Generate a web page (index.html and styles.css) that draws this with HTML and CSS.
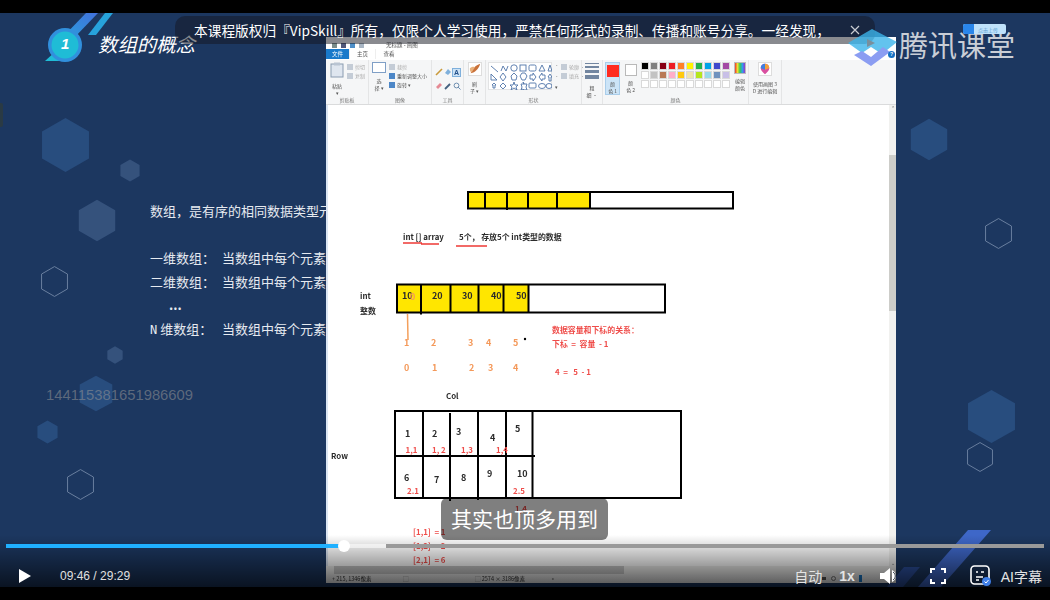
FILE: index.html
```html
<!DOCTYPE html>
<html lang="zh-CN">
<head>
  <meta charset="UTF-8">
  <meta name="viewport" content="width=device-width, initial-scale=1.0">
  <title>数组的概念</title>
  <link rel="stylesheet" href="styles.css">
</head>
<body>

  <div class="player">

    <!-- slide background -->
    <div class="slide">
      <svg class="decor" viewBox="0 13 1050 574" width="1050" height="574">
        <defs>
          <symbol id="hex" viewBox="0 0 48 54" preserveAspectRatio="none">
            <polygon points="24,1 47,14 47,40 24,53 1,40 1,14"/>
          </symbol>
          <linearGradient id="stripe" x1="0" y1="1" x2="1" y2="0">
            <stop offset="0" stop-color="#27a3dc"/>
            <stop offset="1" stop-color="#4270dc"/>
          </linearGradient>
        </defs>

        <g class="hex-a">
          <use href="#hex" x="41" y="117" width="49" height="56"/>
          <use href="#hex" x="79" y="375" width="34" height="37"/>
          <use href="#hex" x="37" y="420" width="21" height="24"/>
          <use href="#hex" x="910" y="118" width="38" height="43"/>
          <use href="#hex" x="967" y="389" width="49" height="55"/>
        </g>
        <g class="hex-b">
          <use href="#hex" x="120" y="159" width="20" height="23"/>
          <use href="#hex" x="78" y="199" width="38" height="43"/>
          <use href="#hex" x="107" y="346" width="16" height="18"/>
        </g>
        <g class="hex-line">
          <use href="#hex" x="41" y="266" width="27" height="31"/>
          <use href="#hex" x="67" y="469" width="27" height="31"/>
          <use href="#hex" x="985" y="218" width="27" height="31"/>
          <use href="#hex" x="967" y="442" width="26" height="30"/>
        </g>

        <!-- title badge -->
        <polygon points="86,13 98,13 72,40 60,40" fill="url(#stripe)"/>
        <polygon points="105,13 113,13 96,35 88,35" fill="#27a3dc"/>
        <polygon points="45,61 56,51 70,61" fill="#1fbcd6"/>
        <circle cx="65" cy="45" r="17" fill="#3190dd"/>
        <circle cx="65" cy="45" r="13.5" fill="#1fbcd6"/>

        <!-- lower right stripes -->
        <polygon points="968,530 991,530 941,587 918,587" fill="#3e67c8"/>
        <polygon points="904,567 920,567 903,587 887,587" fill="#2c4f9c"/>
      </svg>

      <span class="badge-num">1</span>
      <h1 class="slide-title">数组的概念</h1>

      <div class="slide-text">
        <p class="intro">数组，是有序的相同数据类型元</p>
        <p class="row"><span class="row-label">一维数组：</span>当数组中每个元素</p>
        <p class="row"><span class="row-label">二维数组：</span>当数组中每个元素</p>
        <p class="row dots">...</p>
        <p class="row"><span class="row-label"><span class="latin">N</span> 维数组：</span>当数组中每个元素</p>
      </div>

      <span class="watermark">144115381651986609</span>
      <span class="edge-tab"></span>
    </div>

    <!-- screen recording of the paint program -->
    <div class="paint">
      <div class="paint-title">
        <span class="qa-icon"></span>
        <span class="qa-icon qa-save"></span>
        <span class="qa-icon qa-undo"></span>
        <span class="qa-icon qa-redo"></span>
        <span class="window-name">无标题 - 画图</span>
      </div>

      <div class="paint-tabs">
        <span class="tab tab-file">文件</span>
        <span class="tab tab-on">主页</span>
        <span class="tab">查看</span>
      </div>

      <div class="ribbon">
        <section class="group g-clip">
          <div class="group-body">
            <div class="big-tool">
              <svg width="14" height="16" viewBox="0 0 14 16"><rect x="1" y="2" width="12" height="13" fill="#dfe6ef" stroke="#8a9bb0"/><rect x="4" y="0.5" width="6" height="3" fill="#b9c4d2"/></svg>
              <span>粘贴</span>
              <span>▾</span>
            </div>
            <div class="small-tools">
              <span class="off"><i class="mini"></i>剪切</span>
              <span class="off"><i class="mini"></i>复制</span>
            </div>
          </div>
          <span class="group-name">剪贴板</span>
        </section>

        <section class="group g-image">
          <div class="group-body">
            <div class="big-tool">
              <svg width="14" height="11" viewBox="0 0 14 11"><rect x="0.5" y="0.5" width="13" height="10" fill="#fff" stroke="#7f9fc6"/></svg>
              <span>选</span>
              <span>择 ▾</span>
            </div>
            <div class="small-tools">
              <span class="off"><i class="mini"></i>裁剪</span>
              <span><i class="mini mini-blue"></i>重新调整大小</span>
              <span><i class="mini mini-blue"></i>旋转 ▾</span>
            </div>
          </div>
          <span class="group-name">图像</span>
        </section>

        <section class="group g-tools">
          <div class="tool-grid">
            <svg width="8" height="8" viewBox="0 0 8 8"><path d="M1 7 7 1" stroke="#c99a3c" stroke-width="1.6"/></svg>
            <svg width="8" height="8" viewBox="0 0 8 8"><path d="M1 5 4 1l3 3-3 3z" fill="#7fb0dc"/></svg>
            <span class="tool-a">A</span>
            <svg width="8" height="8" viewBox="0 0 8 8"><path d="M1 5 5 1l2 2-4 4z" fill="#e58a94"/></svg>
            <svg width="8" height="8" viewBox="0 0 8 8"><path d="M1 7 6 2" stroke="#44617f" stroke-width="1.8"/></svg>
            <svg width="8" height="8" viewBox="0 0 8 8"><circle cx="3.5" cy="3.5" r="2.4" fill="none" stroke="#6f8fb0"/><path d="M5 5 7.5 7.5" stroke="#6f8fb0"/></svg>
          </div>
          <span class="group-name">工具</span>
        </section>

        <section class="group g-brush">
          <div class="big-tool">
            <svg class="boxed" width="14" height="14" viewBox="0 0 14 14"><path d="M2 12C3 7 8 3 13 1c-1 5-5 9-8 10z" fill="#c9713a"/><path d="M1 6c3-2 5-2 6-1L3 11C1 10 1 8 1 6z" fill="#e8b17c"/></svg>
            <span>刷</span>
            <span>子 ▾</span>
          </div>
        </section>

        <section class="group g-shapes">
          <div class="group-body">
            <div class="shape-box">
              <svg width="63" height="27" viewBox="0 0 63 27" fill="none" stroke="#4f74a8" stroke-width="0.9">
                <path d="M2 3l7 6M12 8l2-5 3 5 2-5"/><circle cx="25" cy="5" r="3.2"/><rect x="31" y="2" width="6" height="6"/><rect x="40" y="2" width="7" height="6" rx="1.5"/><path d="M50 8l3-6 3 6z"/><path d="M59 8l2-6 2 6z"/>
                <path d="M2 17V11l6 6z"/><path d="M14 10l3 4-3 4-3-4z"/><path d="M25 10l3 3-1 4h-4l-1-4z"/><path d="M33 10h3l2 3-2 4h-3l-2-4z"/><path d="M41 12h3v-2l3 4-3 4v-2h-3z"/><path d="M56 12h-3v-2l-3 4 3 4v-2h3z"/><path d="M61 11l2 3h-1v4h-2v-4h-1z"/>
                <path d="M5 20l2 2h-1v3H4v-3H3z"/><path d="M14 20l3 3-3 3-3-3z"/><path d="M25 19l1 3h3l-2 2 1 3-3-2-3 2 1-3-2-2h3z"/><path d="M34 19l1 2h3l-1 3 1 3h-3l-1-1-2 1 1-3-1-3h3z"/><rect x="40" y="20" width="7" height="5" rx="1"/><ellipse cx="53" cy="23" rx="3.5" ry="2.5"/><ellipse cx="60" cy="23" rx="3" ry="2.5"/>
              </svg>
            </div>
            <div class="shape-scroll"><span>-</span><span>-</span><span>▾</span></div>
            <div class="small-tools">
              <span class="off"><i class="mini"></i>轮廓 ·</span>
              <span class="off"><i class="mini"></i>填充 ·</span>
            </div>
          </div>
          <span class="group-name">形状</span>
        </section>

        <section class="group g-size">
          <div class="big-tool">
            <div class="weights"><i></i><i></i><i></i><i></i></div>
            <span>粗</span>
            <span>细 ·</span>
          </div>
        </section>

        <section class="group g-colors">
          <div class="group-body">
            <div class="color-slot slot-on">
              <span class="color-box box-red"></span>
              <span>颜</span>
              <span>色 1</span>
            </div>
            <div class="color-slot">
              <span class="color-box"></span>
              <span>颜</span>
              <span>色 2</span>
            </div>
            <div class="palette">
              <i class="sw-black"></i><i class="sw-gray"></i><i class="sw-maroon"></i><i class="sw-red"></i><i class="sw-orange"></i><i class="sw-yellow"></i><i class="sw-green"></i><i class="sw-sky"></i><i class="sw-indigo"></i><i class="sw-purple"></i>
              <i></i><i class="sw-silver"></i><i class="sw-brown"></i><i class="sw-pink"></i><i class="sw-gold"></i><i class="sw-cream"></i><i class="sw-lime"></i><i class="sw-ice"></i><i class="sw-steel"></i><i class="sw-lilac"></i>
              <i></i><i></i><i></i><i></i><i></i><i></i><i></i><i></i><i></i><i></i>
            </div>
            <div class="color-edit">
              <span class="rainbow"></span>
              <span>编辑</span>
              <span>颜色</span>
            </div>
          </div>
          <span class="group-name">颜色</span>
        </section>

        <section class="group g-3d">
          <div class="big-tool">
            <svg class="boxed" width="14" height="14" viewBox="0 0 14 14"><path d="M7 1c3 0 5 2 5 5 0 3-3 5-5 7-2-2-5-4-5-7 0-3 2-5 5-5z" fill="#d94fa0"/><path d="M7 1c3 0 5 2 5 5L7 8z" fill="#f2a03c"/><path d="M2 6c0-3 2-5 5-5v7z" fill="#3f7fe0"/></svg>
            <span>使用画图 3</span>
            <span>D 进行编辑</span>
          </div>
        </section>
      </div>

      <div class="paint-work">
        <svg class="sheet" viewBox="326 105 563 461" width="563" height="461">
          <!-- top array -->
          <rect class="fill-y" x="468" y="192" width="122" height="16.5"/>
          <rect class="box" x="468" y="192" width="265" height="16.5"/>
          <path class="box" d="M485 192v16.5M507 192v18M528 192v16.5M557 192v16.5M590 192v16.5"/>

          <text class="t" x="403" y="240">int [] array</text>
          <text class="t" x="459" y="240">5个， 存放5个 int类型的数据</text>
          <path class="ink" d="M403 243h19M421 244h18M456 246h31"/>

          <!-- int array -->
          <text class="t" x="360" y="299">int</text>
          <text class="t" x="360" y="314">整数</text>
          <rect class="fill-y" x="397" y="284.5" width="132" height="28"/>
          <rect class="box" x="397" y="284.5" width="268" height="28"/>
          <path class="box" d="M421 284.5v30M450.500 284.500v28M478.500 284.500v28M503.500 284.500v28M528.500 284.500v28"/>
          <text class="t n" x="402" y="299">10</text>
          <text class="o n" x="410" y="300">0</text>
          <text class="t n" x="432" y="299">20</text>
          <text class="t n" x="462" y="299">30</text>
          <text class="t n" x="491" y="299">40</text>
          <text class="t n" x="516" y="299">50</text>

          <path class="mark" d="M407.500 314l.5 26"/>
          <text class="o n" x="404" y="346">1</text>
          <text class="o n" x="431" y="346">2</text>
          <text class="o n" x="468" y="346">3</text>
          <text class="o n" x="486" y="346">4</text>
          <text class="o n" x="513" y="346">5</text>
          <circle cx="525" cy="339" r="1.200"/>
          <text class="o n" x="404" y="371">0</text>
          <text class="o n" x="432" y="371">1</text>
          <text class="o n" x="469" y="371">2</text>
          <text class="o n" x="488" y="371">3</text>
          <text class="o n" x="513" y="371">4</text>

          <text class="r" x="552" y="333">数据容量和下标的关系：</text>
          <text class="r" x="552" y="347">下标 &#160;= &#160;容量 &#160;- 1</text>
          <text class="r" x="555" y="375">4 &#160;= &#160;&#160;5 &#160;- 1</text>

          <!-- two dimensional -->
          <text class="t" x="446" y="399">Col</text>
          <text class="t" x="331" y="459">Row</text>
          <rect class="box" x="395" y="411" width="286" height="87"/>
          <path class="box" d="M423 411v87M450 413v88M478 411v89M506 411v87M532.500 411v87M395 456h140"/>
          <text class="t n" x="405" y="437">1</text>
          <text class="t n" x="432" y="437">2</text>
          <text class="t n" x="456" y="435">3</text>
          <text class="t n" x="490" y="441">4</text>
          <text class="t n" x="515" y="432">5</text>
          <text class="t n" x="404" y="481">6</text>
          <text class="t n" x="434" y="483">7</text>
          <text class="t n" x="461" y="481">8</text>
          <text class="t n" x="487" y="477">9</text>
          <text class="t n" x="517" y="477">10</text>
          <text class="r" x="405.500" y="453">1,1</text>
          <text class="r" x="432" y="453">1, 2</text>
          <text class="r" x="461" y="453">1,3</text>
          <text class="r" x="496" y="453">1,4</text>
          <text class="r" x="407" y="494">2.1</text>
          <text class="r" x="513" y="494">2.5</text>
          <text class="r" x="515" y="512">1,4</text>
          <text class="r" x="413" y="535">[1,1] &#160;= 1</text>
          <text class="r" x="413" y="549">[1,2] &#160;= 2</text>
          <text class="r" x="413" y="563">[2,1] &#160;= 6</text>
        </svg>
        <div class="vscroll">
          <span class="vup">⌃</span>
          <span class="vthumb"></span>
          <span class="vdown">⌄</span>
        </div>
      </div>

      <div class="hscroll"><span class="hthumb"></span></div>

      <div class="paint-status">
        <span class="cell-pos">+ 215, 1346像素</span>
        <span class="cell-sel">⬚</span>
        <span class="cell-size">⬚ 2574 × 3186像素</span>
        <span class="cell-disk">▫</span>
        <span class="zoom-bits"><i class="bit"></i><i class="bit bit-ring"></i><i class="bit bit-blue"></i></span>
      </div>
    </div>

    <!-- copyright notice -->
    <div class="notice">
      <span class="notice-text">本课程版权归『VipSkill』所有，仅限个人学习使用，严禁任何形式的录制、传播和账号分享。一经发现，</span>
      <svg class="notice-close" width="10" height="10" viewBox="0 0 10 10"><path d="M1 1l8 8M9 1 1 9" stroke="#c9ccd2" stroke-width="1.200"/></svg>
    </div>

    <!-- logo -->
    <div class="brand">
      <svg class="brand-mark" width="50" height="42" viewBox="0 0 50 42">
        <polygon points="1,16 25,2 50,15 35,27 24,20 15,26" fill="#3cb4ea" fill-opacity=".8"/>
        <polygon points="20,12 28,16 20,20" fill="#7a8f9c"/>
        <polygon points="7,28 15,24 24,30 36,20 43,25 24,39" fill="#8b9df2"/>
      </svg>
      <span class="brand-name">腾讯课堂</span>
      <span class="brand-tag"><i></i>点击上传</span>
      <span class="brand-help">?</span>
    </div>

    <div class="caption">其实也顶多用到</div>

    <!-- player controls -->
    <div class="controls">
      <div class="progress">
        <span class="played"></span>
        <span class="thumb"></span>
        <span class="loaded"></span>
        <span class="rest"></span>
      </div>
      <div class="control-row">
        <svg class="play" width="14" height="16" viewBox="0 0 14 16"><polygon points="1,1 13,8 1,15" fill="#fff"/></svg>
        <span class="time">09:46 / 29:29</span>
        <span class="ctl-text auto">自动</span>
        <span class="ctl-text speed">1x</span>
        <svg class="volume" width="20" height="18" viewBox="0 0 20 18">
          <path d="M0 6h4l6-5v16l-6-5H0z" fill="#fff"/>
          <path d="M12 3c5 2 5 10 0 12z" fill="#fff"/>
          <path d="M13 5c3 2 3 6 0 8" fill="none" stroke="#39424f" stroke-width="1"/>
        </svg>
        <svg class="fullscreen" width="16" height="16" viewBox="0 0 16 16" fill="none" stroke="#fff" stroke-width="2"><path d="M1 5V1h4M11 1h4v4M15 11v4h-4M5 15H1v-4"/></svg>
        <svg class="ai-icon" width="22" height="22" viewBox="0 0 22 22">
          <rect x="1" y="1" width="18" height="18" rx="3.500" fill="none" stroke="#fff" stroke-width="1.600"/>
          <path d="M6 7h2M11 7h3M6 12h7M6 15h3" stroke="#fff" stroke-width="1.600"/>
          <circle cx="16.500" cy="16.500" r="4.500" fill="#3f7fe8"/>
          <path d="M14.500 16.500l1.500 1.500 2.500-3" fill="none" stroke="#fff" stroke-width="1"/>
        </svg>
        <span class="ctl-text">AI字幕</span>
      </div>
    </div>

  </div>

</body>
</html>
```

FILE: styles.css
```css
:root {
  --cor-slide: #1c3760;
  --cjk: "Noto Sans CJK SC", "Noto Sans", sans-serif;
  --ui: "Liberation Sans", "Noto Sans CJK SC", sans-serif;
}

* {
  box-sizing: border-box;
}

body {
  margin: 0;
  background: #000;
  font-family: var(--cjk);
}

.player {
  position: relative;
  width: 1050px;
  height: 600px;
  background: #000;
  overflow: hidden;
}

/* slide */
.slide {
  position: absolute;
  left: 0;
  top: 13px;
  width: 1050px;
  height: 574px;
  background: var(--cor-slide);
  overflow: hidden;
}

.decor {
  position: absolute;
  left: 0;
  top: 0;
}

.hex-a { fill: #284d7e; }
.hex-b { fill: #35527c; }

.hex-line {
  fill: none;
  stroke: #7287a6;
  stroke-width: 1.6;
}

.badge-num {
  position: absolute;
  left: 61px;
  top: 22px;
  color: #fff;
  font: italic 15px var(--ui);
  font-weight: 700;
}

.slide-title {
  position: absolute;
  left: 98px;
  top: 18px;
  margin: 0;
  color: #fff;
  font-size: 19.400px;
  font-style: italic;
  font-weight: 400;
  line-height: 26px;
}

.slide-text {
  position: absolute;
  left: 150px;
  top: 188px;
  color: #e6eaf0;
  font-size: 13px;
  line-height: 20px;
  white-space: nowrap;
}

.slide-text p {
  margin: 0;
}

.slide-text .intro {
  margin-bottom: 27px;
}

.slide-text .row {
  height: 23.7px;
}

.row-label {
  display: inline-block;
  width: 72px;
}

.dots {
  padding-left: 19px;
  font-weight: 700;
}

.latin {
  font-family: "DejaVu Sans Mono", monospace;
  font-size: 12px;
}

.watermark {
  position: absolute;
  left: 46px;
  top: 373px;
  color: rgba(150, 150, 150, .55);
  font: 14.8px/18px var(--ui);
}

.edge-tab {
  position: absolute;
  left: -3px;
  top: 90px;
  width: 6px;
  height: 24px;
  border-radius: 2px;
  background: #2a3a44;
}

/* paint window */
.paint {
  position: absolute;
  left: 326px;
  top: 37px;
  width: 570px;
  height: 546px;
  display: flex;
  flex-direction: column;
  background: #fff;
  filter: blur(.45px);
  color: #555;
  font-size: 5px;
  line-height: 6px;
}

.paint-title {
  height: 12px;
  padding: 4px 0 0 6px;
  display: flex;
  align-items: center;
  gap: 4px;
  font-size: 5.5px;
}

.qa-icon {
  width: 5px;
  height: 5px;
  background: #7a8c8a;
}

.qa-save { background: #50587a; }
.qa-undo { background: #4d8fc9; }
.qa-redo { background: #a9b6c4; }

.window-name {
  margin-left: 18px;
}

.paint-tabs {
  height: 11px;
  display: flex;
  align-items: flex-start;
  font-size: 5.500px;
}

.tab {
  height: 10px;
  padding: 2px 0;
  width: 26px;
  text-align: center;
}

.tab-file {
  width: 23px;
  background: #1979ca;
  color: #fff;
}

.tab-on {
  width: 27px;
  border-left: 1px solid #eee;
  border-right: 1px solid #eee;
}

.ribbon {
  height: 45px;
  display: flex;
  background: #f5f6f7;
  border-bottom: 1px solid #dadbdc;
}

.group {
  position: relative;
  height: 44px;
  padding: 2px 2px 0;
  border-right: 1px solid #e4e5e6;
}

.group-body {
  display: flex;
  gap: 3px;
}

.group-name {
  position: absolute;
  left: 0;
  right: 0;
  bottom: 1px;
  text-align: center;
  color: #777;
}

.g-clip { width: 43px; padding-left: 4px; }
.g-image { width: 63px; padding-left: 3px; }
.g-tools { width: 32px; }
.g-brush { width: 22px; }
.g-shapes { width: 96px; }
.g-size { width: 21px; }
.g-colors { width: 146px; }
.g-3d { width: 33px; }

.big-tool {
  display: flex;
  flex-direction: column;
  align-items: center;
  gap: 1.5px;
  white-space: nowrap;
}

.big-tool svg {
  margin-bottom: 3px;
}

.boxed {
  background: #fff;
  border: 1px solid #ddd;
}

.small-tools {
  display: flex;
  flex-direction: column;
  gap: 3px;
  padding-top: 2px;
  white-space: nowrap;
}

.small-tools span {
  display: flex;
  align-items: center;
  gap: 2px;
}

.off {
  color: #aaa;
}

.mini {
  width: 6px;
  height: 6px;
  background: #c4ccd6;
}

.mini-blue {
  background: #4d87c7;
}

.tool-grid {
  display: grid;
  grid-template-columns: repeat(3, 9px);
  grid-auto-rows: 14px;
  align-items: center;
  justify-items: center;
  padding-top: 3px;
}

.tool-a {
  width: 9px;
  height: 9px;
  background: #cde3f6;
  border: 1px solid #7fb0dc;
  color: #23508a;
  font: bold 7px/7px var(--ui);
  text-align: center;
}

.shape-box {
  width: 64px;
  height: 28px;
  background: #fff;
  border: 1px solid #e2e3e4;
}

.shape-scroll {
  width: 5px;
  display: flex;
  flex-direction: column;
  justify-content: space-between;
  height: 28px;
  text-align: center;
}

.weights {
  display: flex;
  flex-direction: column;
  gap: 2px;
  width: 14px;
  padding-top: 1px;
  margin-bottom: 4px;
}

.weights i {
  display: block;
  height: 1px;
  background: #7286a0;
}

.weights i:nth-child(2) { height: 2px; }
.weights i:nth-child(3) { height: 3px; }
.weights i:nth-child(4) { height: 4px; }

.color-slot {
  width: 19px;
  height: 33px;
  display: flex;
  flex-direction: column;
  align-items: center;
  padding-top: 2px;
  gap: 1px;
}

.slot-on {
  background: #cce4f7;
  border: 1px solid #a9cdea;
}

.color-box {
  width: 12px;
  height: 12px;
  margin-bottom: 3px;
  background: #fff;
  border: 1px solid #b9b9b9;
}

.box-red {
  background: #ff2b20;
  border: 0;
}

.palette {
  display: grid;
  grid-template-columns: repeat(10, 8px);
  grid-auto-rows: 8px;
  gap: 1px;
}

.palette i {
  background: #fff;
  border: 1px solid #d9d9d9;
}

.sw-black { background: #000 !important; }
.sw-gray { background: #7f7f7f !important; }
.sw-maroon { background: #880015 !important; }
.sw-red { background: #ed1c24 !important; }
.sw-orange { background: #ff7f27 !important; }
.sw-yellow { background: #fff200 !important; }
.sw-green { background: #22b14c !important; }
.sw-sky { background: #00a2e8 !important; }
.sw-indigo { background: #3f48cc !important; }
.sw-purple { background: #a349a4 !important; }
.sw-silver { background: #c3c3c3 !important; }
.sw-brown { background: #b97a57 !important; }
.sw-pink { background: #ffaec9 !important; }
.sw-gold { background: #ffc90e !important; }
.sw-cream { background: #efe4b0 !important; }
.sw-lime { background: #b5e61d !important; }
.sw-ice { background: #99d9ea !important; }
.sw-steel { background: #7092be !important; }
.sw-lilac { background: #c8bfe7 !important; }

.color-edit {
  display: flex;
  flex-direction: column;
  align-items: center;
  width: 13px;
  margin-left: 1px;
  gap: 1px;
}

.rainbow {
  width: 12px;
  height: 12px;
  margin-bottom: 3px;
  border: 1px solid #bbb;
  background: linear-gradient(90deg, #e33, #ed3, #3c5, #39e, #93c);
}

.paint-work {
  flex: 1;
  min-height: 0;
  display: flex;
  box-shadow: inset 2px 0 0 #dbe5f2;
}

.sheet {
  display: block;
}

.sheet text {
  font-family: var(--cjk);
  font-size: 7.900px;
  font-weight: 700;
}

.sheet .n {
  font-size: 9px;
}

.sheet .t { fill: #2b2b2b; }
.sheet .o { fill: #f4995a; }
.sheet .r { fill: #ef4d4a; }

.fill-y {
  fill: #ffe600;
}

.box {
  fill: none;
  stroke: #000;
  stroke-width: 2;
}

.ink {
  fill: none;
  stroke: #ee3a36;
  stroke-width: 1.400;
}

.mark {
  fill: none;
  stroke: #f4a05c;
  stroke-width: 1.500;
}

.vscroll {
  position: relative;
  flex: 1;
  display: flex;
  flex-direction: column;
  justify-content: space-between;
  align-items: center;
  background: #f1f1ef;
  color: #666;
}

.vthumb {
  position: absolute;
  left: 0;
  right: 0;
  top: 50px;
  height: 156px;
  background: #cdcdc9;
}

.hscroll {
  position: relative;
  height: 8px;
  background: #f1f1ef;
}

.hthumb {
  position: absolute;
  left: 8px;
  top: 0;
  width: 290px;
  height: 8px;
  background: #c8c8c8;
}

.paint-status {
  height: 9px;
  display: flex;
  align-items: center;
  padding-left: 6px;
  background: #f0f0f0;
  color: #333;
  font-size: 5.500px;
  white-space: nowrap;
}

.cell-pos { width: 71px; }
.cell-sel { width: 72px; }
.cell-size { width: 75px; }
.cell-disk { width: 272px; }

.zoom-bits {
  display: flex;
  align-items: center;
  gap: 5px;
}

.bit {
  width: 4px;
  height: 3px;
  background: #555;
}

.bit-ring {
  width: 5px;
  height: 5px;
  border: 1px solid #777;
  border-radius: 50%;
  background: none;
}

.bit-blue {
  width: 3px;
  height: 7px;
  margin-left: 18px;
  background: #1979ca;
}

/* notice */
.notice {
  position: absolute;
  left: 175px;
  top: 16px;
  width: 700px;
  height: 28px;
  display: flex;
  align-items: center;
  padding-left: 19px;
  border-radius: 10px;
  background: rgba(20, 22, 32, .5);
}

.notice-text {
  width: 650px;
  color: #fff;
  font-size: 13.700px;
  white-space: nowrap;
}

.notice-close {
  margin-left: 6px;
}

/* logo */
.brand-mark {
  position: absolute;
  left: 847px;
  top: 27px;
}

.brand-name {
  position: absolute;
  left: 899px;
  top: 24px;
  color: #c9ced6;
  font-size: 29px;
  line-height: 40px;
}

.brand-tag {
  position: absolute;
  left: 963px;
  top: 24px;
  width: 43px;
  height: 10px;
  display: flex;
  align-items: center;
  gap: 4px;
  border-radius: 2px;
  background: #bfe2fb;
  color: #5d9ed0;
  font-size: 5px;
}

.brand-tag i {
  width: 11px;
  height: 10px;
  border-radius: 2px 0 0 2px;
  background: #2a86ea;
}

.brand-help {
  position: absolute;
  left: 888px;
  top: 51px;
  width: 7px;
  height: 7px;
  border-radius: 50%;
  background: #1270c4;
  color: #fff;
  font: bold 5px/7px var(--ui);
  text-align: center;
}

/* subtitle */
.caption {
  position: absolute;
  left: 441px;
  top: 498px;
  width: 167px;
  height: 42px;
  padding-top: 5px;
  border-radius: 6px;
  background: rgba(0, 0, 0, .5);
  color: #fff;
  font-size: 21px;
  line-height: 30px;
  text-align: center;
}

/* controls */
.controls {
  position: absolute;
  left: 0;
  top: 535px;
  width: 1050px;
  height: 52px;
  padding: 9px 6px 0;
  background: linear-gradient(rgba(0, 0, 0, 0), rgba(0, 0, 0, .65));
}

.progress {
  position: relative;
  height: 4px;
  display: flex;
}

.played {
  width: 334px;
  background: #1fb0ff;
}

.loaded {
  width: 46px;
  background: rgba(255, 255, 255, .55);
}

.rest {
  flex: 1;
  background: #999;
}

.thumb {
  position: absolute;
  left: 332px;
  top: -4px;
  width: 12px;
  height: 12px;
  border-radius: 50%;
  background: #fff;
}

.control-row {
  display: flex;
  align-items: center;
  height: 24px;
  margin: 16px 2px 0 0;
}

.play {
  margin-left: 12px;
}

.time {
  margin-left: 28px;
  color: #e0e0e0;
  font: 12px var(--ui);
}

.ctl-text {
  color: #e4e4e4;
  font: 14px var(--ui);
}

.auto {
  margin-left: auto;
}

.speed {
  margin-left: 17px;
  font-weight: 700;
}

.volume {
  margin-left: 25px;
}

.fullscreen {
  margin-left: 30px;
}

.ai-icon {
  margin: 0 9px 0 24px;
}
```
